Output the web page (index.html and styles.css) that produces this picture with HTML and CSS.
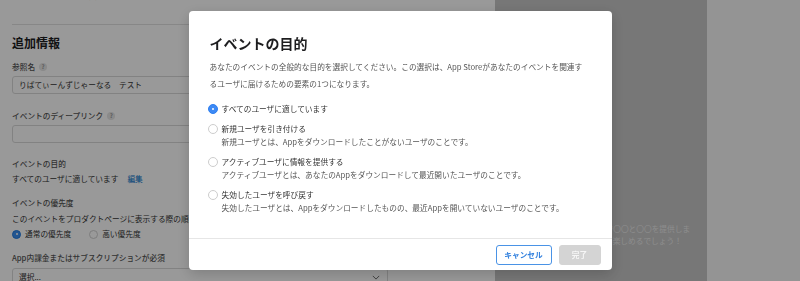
FILE: index.html
```html
<!DOCTYPE html>
<html lang="ja">
<head>
<meta charset="utf-8">
<title>イベントの目的</title>
<link rel="stylesheet" href="styles.css">
</head>
<body>
<div class="app">
  <main class="editor">
    <div class="editor-inner">
      <div class="stub"><span>イベントカードの説明文</span></div>
      <h2 class="section-title">追加情報</h2>
      <div class="field-label gap-10">参照名<span class="help">?</span></div>
      <div class="input gap-3">りばてぃーんずじゃーなる　テスト</div>
      <div class="field-label gap-16">イベントのディープリンク<span class="help">?</span></div>
      <div class="input gap-3"></div>
      <div class="field-label gap-15">イベントの目的</div>
      <div class="value gap-3">すべてのユーザに適しています<a class="link">編集</a></div>
      <div class="field-label gap-12">イベントの優先度</div>
      <div class="value gap-4">このイベントをプロダクトページに表示する際の順序を選択してください。</div>
      <div class="radio-row gap-3">
        <span class="choice"><span class="mini-radio on"></span>通常の優先度</span>
        <span class="choice"><span class="mini-radio"></span>高い優先度</span>
      </div>
      <div class="field-label gap-12">App内課金またはサブスクリプションが必須</div>
      <div class="input select gap-4">
        <span>選択...</span>
        <svg class="chevron" viewBox="0 0 10 6" width="8" height="5"><path d="M1 1l4 4 4-4" fill="none" stroke="#666" stroke-width="1.2"/></svg>
      </div>
    </div>
  </main>
  <section class="preview">
    <p class="preview-text">ゲーム内で〇〇と〇〇を提供しま<br>す。誰でも楽しめるでしょう！</p>
  </section>
  <aside class="side"></aside>
</div>

<div class="overlay">
  <div class="modal" role="dialog">
    <div class="modal-body">
      <h1 class="modal-title">イベントの目的</h1>
      <p class="modal-desc">あなたのイベントの全般的な目的を選択してください。この選択は、App Storeがあなたのイベントを関連す<br>るユーザに届けるための要素の1つになります。</p>
      <div class="options">
        <div class="option">
          <span class="radio on"></span>
          <span class="opt-label">すべてのユーザに適しています</span>
        </div>
        <div class="option">
          <span class="radio"></span>
          <span class="opt-label">新規ユーザを引き付ける</span>
          <span class="opt-desc">新規ユーザとは、Appをダウンロードしたことがないユーザのことです。</span>
        </div>
        <div class="option">
          <span class="radio"></span>
          <span class="opt-label">アクティブユーザに情報を提供する</span>
          <span class="opt-desc">アクティブユーザとは、あなたのAppをダウンロードして最近開いたユーザのことです。</span>
        </div>
        <div class="option">
          <span class="radio"></span>
          <span class="opt-label">失効したユーザを呼び戻す</span>
          <span class="opt-desc">失効したユーザとは、Appをダウンロードしたものの、最近Appを開いていないユーザのことです。</span>
        </div>
      </div>
    </div>
    <div class="modal-footer">
      <button class="btn btn-cancel">キャンセル</button>
      <button class="btn btn-done" disabled>完了</button>
    </div>
  </div>
</div>
</body>
</html>
```

FILE: styles.css
```css
* {
  box-sizing: border-box;
  margin: 0;
  padding: 0;
}

html,
body {
  width: 800px;
  height: 281px;
  overflow: hidden;
}

body {
  font-family: "Noto Sans CJK JP", "Noto Sans", sans-serif;
  font-size: 7.7px;
  color: #333;
  background: #fff;
}

.app {
  display: flex;
  height: 281px;
}

/* ---------- editor (left) ---------- */
.editor {
  width: 495px;
  flex: none;
  background: #fff;
}

.editor-inner {
  width: 388px;
  padding-left: 12px;
}

.stub {
  display: flex;
  align-items: flex-start;
  height: 25px;
  border-bottom: 1px solid #e2e2e2;
}

.stub span {
  margin-top: -10px;
  line-height: 12px;
  color: #777;
}

.section-title {
  margin-top: 10px;
  font-size: 12px;
  line-height: 16px;
  font-weight: 700;
  color: #1d1d1f;
}

.field-label {
  display: flex;
  align-items: center;
  line-height: 12px;
  font-weight: 500;
  color: #555;
}

.help {
  display: inline-block;
  width: 8px;
  height: 8px;
  margin-left: 4px;
  border-radius: 50%;
  background: #e6e6e6;
  color: #9a9a9a;
  font-size: 6px;
  line-height: 8px;
  text-align: center;
  font-weight: 700;
}

.value {
  line-height: 12px;
  color: #333;
  white-space: nowrap;
}

.link {
  margin-left: 9px;
  color: #0070c9;
}

.input {
  height: 18px;
  border: 1px solid #d9d9d9;
  border-radius: 3px;
  padding: 0 6px;
  line-height: 16px;
  color: #333;
}

.select {
  display: flex;
  align-items: center;
  justify-content: space-between;
  padding-right: 7px;
}

.radio-row {
  display: flex;
  align-items: center;
  gap: 18px;
  line-height: 12px;
  color: #333;
}

.choice {
  display: flex;
  align-items: center;
  gap: 4px;
}

.mini-radio {
  width: 9px;
  height: 9px;
  border-radius: 50%;
  border: 1px solid #d0d0d0;
  background: #fff;
  position: relative;
}

.mini-radio.on {
  border-color: #1f7be0;
  background: #3a8ef0;
}

.mini-radio.on::after {
  content: "";
  position: absolute;
  left: 2.5px;
  top: 2.5px;
  width: 2px;
  height: 2px;
  border-radius: 50%;
  background: #fff;
}

.gap-3 { margin-top: 3px; }
.gap-4 { margin-top: 4px; }
.gap-10 { margin-top: 10px; }
.gap-12 { margin-top: 12px; }
.gap-15 { margin-top: 15px; }
.gap-16 { margin-top: 16px; }

/* ---------- preview (middle) ---------- */
.preview {
  width: 212px;
  flex: none;
  background: #c6c6c6;
  padding: 223px 0 0 80px;
}

.preview-text {
  line-height: 11.5px;
  color: #ebebeb;
  white-space: nowrap;
}

.side {
  flex: 1;
  background: #f7f7f7;
}

/* ---------- overlay & modal ---------- */
.overlay {
  position: fixed;
  inset: 0;
  background: rgba(0, 0, 0, 0.4);
  display: flex;
  align-items: center;
  justify-content: center;
}

.modal {
  width: 423px;
  height: 259px;
  background: #fff;
  border-radius: 4px;
  box-shadow: 0 4px 14px rgba(0, 0, 0, 0.18);
  display: flex;
  flex-direction: column;
}

.modal-body {
  padding: 22px 12px 0 21px;
}

.modal-title {
  font-size: 14px;
  line-height: 20px;
  font-weight: 700;
  color: #1d1d1f;
}

.modal-desc {
  margin-top: 5px;
  line-height: 17px;
  color: #555;
  white-space: nowrap;
}

.options {
  margin-top: 10px;
  margin-left: -2px;
  display: flex;
  flex-direction: column;
  gap: 7px;
}

.option {
  display: grid;
  grid-template-columns: 10px 1fr;
  column-gap: 4px;
  line-height: 13px;
}

.radio {
  grid-column: 1;
  grid-row: 1;
  align-self: center;
  width: 10px;
  height: 10px;
  border-radius: 50%;
  border: 1px solid #cdcdcd;
  background: #fff;
  position: relative;
}

.radio.on {
  border-color: #2f7ff0;
  background: #3d8af5;
}

.radio.on::after {
  content: "";
  position: absolute;
  left: 3px;
  top: 3px;
  width: 2px;
  height: 2px;
  border-radius: 50%;
  background: #fff;
}

.opt-label {
  grid-column: 2;
  grid-row: 1;
  color: #333;
}

.opt-desc {
  grid-column: 2;
  grid-row: 2;
  color: #555;
  white-space: nowrap;
}

.modal-footer {
  margin-top: auto;
  border-top: 1px solid #e6e6e6;
  padding: 6px 11px 5px;
  display: flex;
  justify-content: flex-end;
  gap: 7px;
}

.btn {
  height: 20px;
  border-radius: 3px;
  font-family: inherit;
  font-size: 7.7px;
  font-weight: 700;
  line-height: 18px;
}

.btn-cancel {
  width: 56px;
  border: 1px solid #4a93e6;
  background: #fff;
  color: #2f7fde;
}

.btn-done {
  width: 42px;
  border: 1px solid #d4d4d4;
  background: #d4d4d4;
  color: #f6f6f6;
}
```
